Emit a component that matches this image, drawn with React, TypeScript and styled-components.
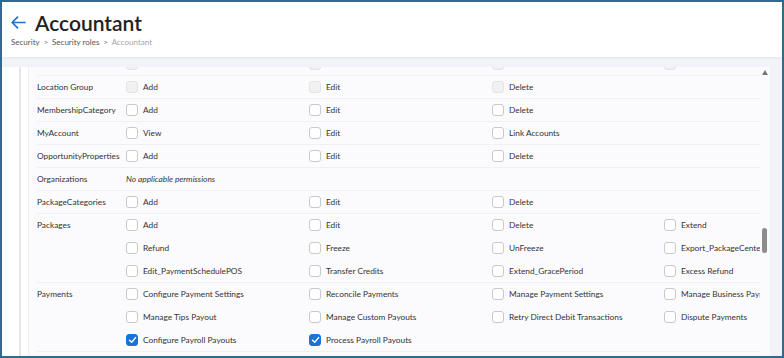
import React from 'react'
import styled, { createGlobalStyle } from 'styled-components'

type Perm = { text: string; checked?: boolean; disabled?: boolean }
type Row = { id: string; label: string; perms?: Perm[]; note?: string }

const d = (text: string): Perm => ({ text, disabled: true })
const p = (text: string, checked = false): Perm => ({ text, checked })

// first row is scrolled almost out of view, only the box edges show
const ROWS: Row[] = [
    { id: 'hidden', label: '', perms: [d(''), d(''), d(''), d('')] },
    { id: 'lg', label: 'Location Group', perms: [d('Add'), d('Edit'), d('Delete')] },
    { id: 'mc', label: 'MembershipCategory', perms: [p('Add'), p('Edit'), p('Delete')] },
    { id: 'ma', label: 'MyAccount', perms: [p('View'), p('Edit'), p('Link Accounts')] },
    { id: 'op', label: 'OpportunityProperties', perms: [p('Add'), p('Edit'), p('Delete')] },
    { id: 'org', label: 'Organizations', note: 'No applicable permissions' },
    { id: 'pc', label: 'PackageCategories', perms: [p('Add'), p('Edit'), p('Delete')] },
    {
        id: 'pk',
        label: 'Packages',
        perms: [
            p('Add'),
            p('Edit'),
            p('Delete'),
            p('Extend'),
            p('Refund'),
            p('Freeze'),
            p('UnFreeze'),
            p('Export_PackageCenter'),
            p('Edit_PaymentSchedulePOS'),
            p('Transfer Credits'),
            p('Extend_GracePeriod'),
            p('Excess Refund'),
        ],
    },
    {
        id: 'pay',
        label: 'Payments',
        perms: [
            p('Configure Payment Settings'),
            p('Reconcile Payments'),
            p('Manage Payment Settings'),
            p('Manage Business Payments'),
            p('Manage Tips Payout'),
            p('Manage Custom Payouts'),
            p('Retry Direct Debit Transactions'),
            p('Dispute Payments'),
            p('Configure Payroll Payouts', true),
            p('Process Payroll Payouts', true),
        ],
    },
]

const App = () => {
    return (
        <>
            <GlobalStyle />
            <Frame>
                <Header>
                    <TitleRow>
                        <BackButton aria-label="Back">
                            <svg width="15" height="13" viewBox="0 0 15 13" fill="none">
                                <path
                                    d="M14 6.5H1.5M6.5 1.2L1.2 6.5l5.3 5.3"
                                    stroke="#1a73d9"
                                    strokeWidth="1.7"
                                    strokeLinecap="round"
                                    strokeLinejoin="round"
                                />
                            </svg>
                        </BackButton>
                        <Title>Accountant</Title>
                    </TitleRow>
                    <Breadcrumbs>
                        <Crumb>Security</Crumb>
                        <Sep>&gt;</Sep>
                        <Crumb>Security roles</Crumb>
                        <Sep>&gt;</Sep>
                        <Crumb $current>Accountant</Crumb>
                    </Breadcrumbs>
                </Header>
                <Body>
                    <Panel>
                        <Gutter />
                        <Content>
                            <Scroller>
                                <Rows>
                                    {ROWS.map((row) => (
                                        <PermRow key={row.id}>
                                            <Label>{row.label}</Label>
                                            {row.note ? (
                                                <Note>{row.note}</Note>
                                            ) : (
                                                <Options>
                                                    {row.perms?.map((perm, i) => (
                                                        <Option key={`${row.id}-${i}`}>
                                                            <Box $checked={perm.checked} $disabled={perm.disabled}>
                                                                {perm.checked && (
                                                                    <svg width="9" height="8" viewBox="0 0 9 8">
                                                                        <path
                                                                            d="M1.5 4.2l2.2 2.1L7.6 1.6"
                                                                            stroke="#fff"
                                                                            strokeWidth="1.4"
                                                                            fill="none"
                                                                            strokeLinecap="round"
                                                                            strokeLinejoin="round"
                                                                        />
                                                                    </svg>
                                                                )}
                                                            </Box>
                                                            {perm.text && <OptionText>{perm.text}</OptionText>}
                                                        </Option>
                                                    ))}
                                                </Options>
                                            )}
                                        </PermRow>
                                    ))}
                                </Rows>
                            </Scroller>
                            <Track>
                                <ArrowUp />
                                <Thumb />
                            </Track>
                        </Content>
                    </Panel>
                </Body>
            </Frame>
        </>
    )
}

export default App

const GlobalStyle = createGlobalStyle`
    html, body {
        margin: 0;
        padding: 0;
        background: #ffffff;
    }
    body {
        font-family: Lato, "Open Sans", sans-serif;
        color: #333;
    }
    * {
        box-sizing: border-box;
    }
`

const Frame = styled.div`
    width: 784px;
    height: 358px;
    border: 2px solid #2e6b8f;
    display: flex;
    flex-direction: column;
    overflow: hidden;
    background: #f1f3f8;
`

const Header = styled.div`
    height: 55px;
    flex: 0 0 auto;
    background: #fff;
    padding: 7px 0 0 8px;
    box-shadow: 0 1px 3px rgba(0, 0, 0, 0.06);
    position: relative;
    z-index: 1;
`

const TitleRow = styled.div`
    display: flex;
    align-items: center;
    gap: 8px;
    height: 26px;
`

const BackButton = styled.span`
    display: flex;
    align-items: center;
    padding: 0 1px;
`

const Title = styled.h1`
    margin: 0;
    font-size: 21px;
    font-weight: 600;
    color: #222;
    letter-spacing: 0;
`

const Breadcrumbs = styled.div`
    display: flex;
    align-items: center;
    gap: 4px;
    margin-top: 2px;
    padding-left: 1px;
    font-size: 8px;
`

const Crumb = styled.span<{ $current?: boolean }>`
    color: ${(props) => (props.$current ? '#a5a5a5' : '#555')};
`

const Sep = styled.span`
    color: #777;
    font-size: 7.5px;
`

const Body = styled.div`
    flex: 1;
    min-height: 0;
    display: flex;
    padding: 10px 12px 0 0;
`

const Panel = styled.div`
    flex: 1;
    display: flex;
    background: #fff;
`

const Gutter = styled.div`
    width: 27px;
    flex: 0 0 auto;
    background: linear-gradient(to right, #fff 17px, #e6e6e6 17px, #e6e6e6 19px, #fff 19px);
    border-right: 1px solid #f0f0f3;
`

const Content = styled.div`
    flex: 1;
    display: flex;
    background: #fbfbfd;
    min-width: 0;
`

const Scroller = styled.div`
    flex: 1;
    min-width: 0;
    overflow: hidden;
    padding-left: 8px;
`

const Rows = styled.div`
    margin-top: -14px;
`

const PermRow = styled.div`
    display: flex;
    border-bottom: 1px solid #eef0f3;
`

const Label = styled.div`
    width: 89px;
    flex: 0 0 auto;
    height: 22px;
    line-height: 22px;
    font-size: 8.3px;
    color: #333;
    white-space: nowrap;
`

const Note = styled.div`
    height: 22px;
    line-height: 22px;
    font-size: 8.3px;
    font-style: italic;
    color: #333;
`

const Options = styled.div`
    flex: 1;
    display: grid;
    grid-template-columns: 183px 183px 172px 1fr;
    grid-auto-rows: 23px;
    margin-bottom: -1px;
`

const Option = styled.div`
    display: flex;
    align-items: center;
    gap: 5px;
    white-space: nowrap;
    overflow: hidden;
    height: 22px;
`

const Box = styled.span<{ $checked?: boolean; $disabled?: boolean }>`
    width: 12px;
    height: 12px;
    flex: 0 0 auto;
    border-radius: 3px;
    display: flex;
    align-items: center;
    justify-content: center;
    border: 1px solid
        ${(props) => (props.$checked ? '#1a73d9' : props.$disabled ? '#e4e4e4' : '#c9c9c9')};
    background: ${(props) => (props.$checked ? '#1a73d9' : props.$disabled ? '#f1f1f1' : '#fff')};
`

const OptionText = styled.span`
    font-size: 8.3px;
    color: #333;
`

const Track = styled.div`
    width: 10px;
    flex: 0 0 auto;
    position: relative;
    display: flex;
    flex-direction: column;
    align-items: center;
    padding-top: 3px;
`

const ArrowUp = styled.span`
    width: 0;
    height: 0;
    border-left: 3.5px solid transparent;
    border-right: 3.5px solid transparent;
    border-bottom: 5px solid #777;
`

const Thumb = styled.span`
    position: absolute;
    top: 161px;
    left: 2px;
    width: 5px;
    height: 25px;
    border-radius: 3px;
    background: #8c8c8c;
`
